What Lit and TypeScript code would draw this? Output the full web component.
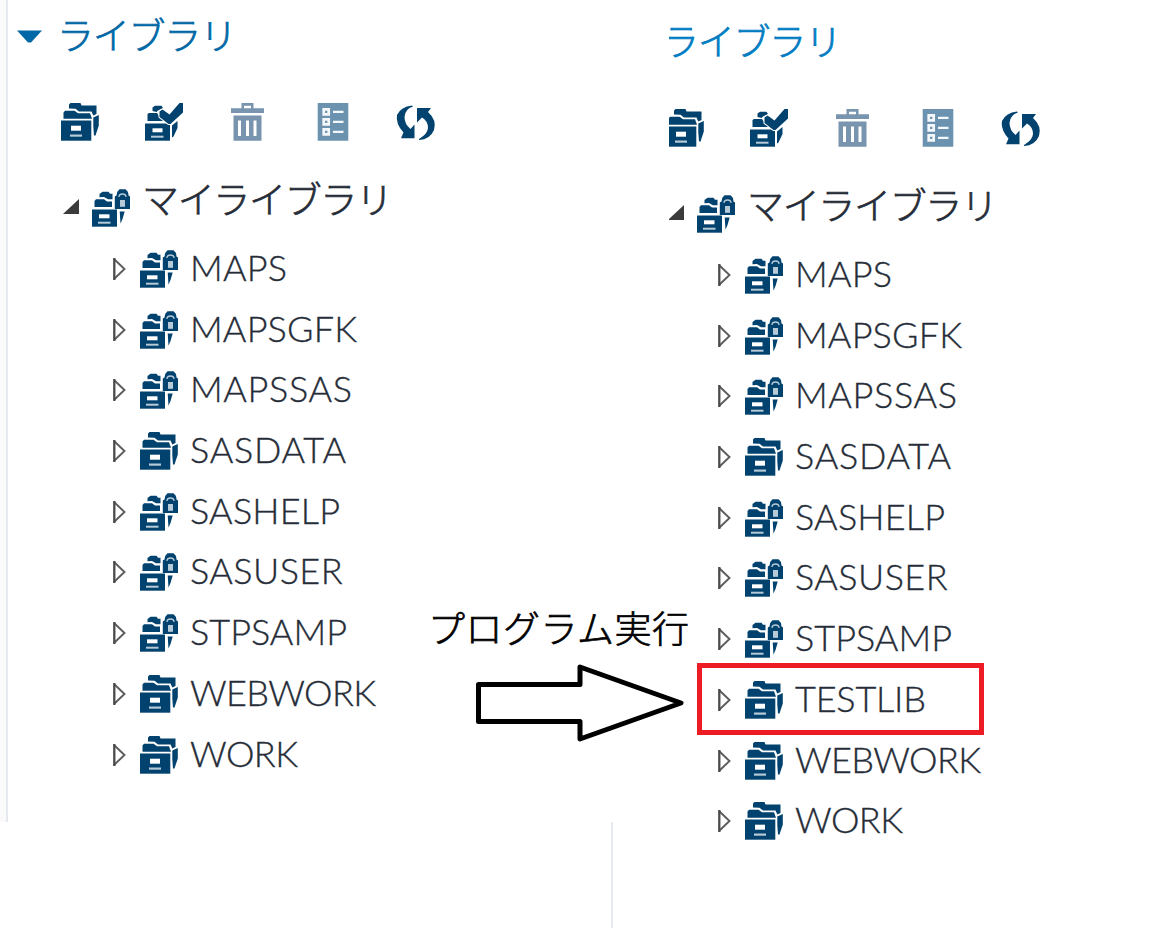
import { LitElement, css, html, svg } from 'lit'
import { customElement, property } from 'lit/decorators.js'

interface Library {
  name: string
  width: number
  locked?: boolean
  marked?: boolean
}

const libraries: Library[] = [
  { name: 'MAPS', width: 97, locked: true },
  { name: 'MAPSGFK', width: 167, locked: true },
  { name: 'MAPSSAS', width: 162, locked: true },
  { name: 'SASDATA', width: 156 },
  { name: 'SASHELP', width: 150, locked: true },
  { name: 'SASUSER', width: 152.5, locked: true },
  { name: 'STPSAMP', width: 157, locked: true },
  { name: 'WEBWORK', width: 186 },
  { name: 'WORK', width: 108 },
]

const withTestlib: Library[] = [
  ...libraries.slice(0, 7),
  { name: 'TESTLIB', width: 131, marked: true },
  ...libraries.slice(7),
]

const icons = {
  library: svg`
    <path d="M0 17.5H30.3V37.7H0Z" />
    <path d="M2.5 15.7V9.5L4 7.7H13.5L17 10.3H29L31 15.7Z" />
    <path d="M8 5.5V1.5L9.5 0H19.5L20.5 2.5H35.5V11L32.3 12.5L30.5 8.5H18L14.5 5.8Z" />
    <path d="M32.3 14.5L37.8 12V22.5L34.5 32.5H33L32.3 23.5Z" />
    <path class="hole" d="M10 22.7H20V27.7H10Z" />
    <path class="pale" d="M9 31.5H21V33.7H9Z" />`,
  locked: svg`
    <path d="M0 20.5H25V37.7H0Z" />
    <path d="M2.5 18V12L4 10.3H12L15 12.5H20V18Z" />
    <path d="M7.5 8.3V5L10.5 2.7H16.5L18 4.8H20.5V10.3H16L12 8Z" />
    <path d="M22.8 20V7.5L24.5 6.5L25.2 3L27.5 .3H33.5L36 3L36.5 6.5L38 7.5V20Z" />
    <path d="M27.7 22.5H32.7L30.5 30L28.5 34.5Z" />
    <path class="hole" d="M7 25.3H17.5V29.3H7Z" />
    <path class="pale" d="M6 32.7H18.5V34.7H6Z" />
    <path class="shackle" d="M26.8 7.8Q27.3 5 30.5 5T34.2 7.8" />
    <path class="pale" d="M28 11H33V17.8H28Z" />`,
  assign: svg`
    <path d="M0 20.5H25V37.7H0Z" />
    <path d="M2.5 18V11L4 10H12L14 13L20 18Z" />
    <path d="M7.5 8V4.5L10 2.7H16.5L18 5L13 7.5L11.5 9Z" />
    <path d="M27 22.5L32.5 18V25L28.5 33.5L27 34.5Z" />
    <path class="tick" d="M14.5 8.5L17.5 6.5L24.5 11.5L34.5 0H38V9.5L25.5 21H23.5L14.5 14Z" />
    <path class="hole" d="M7.5 25.3H17.5V29.3H7.5Z" />
    <path class="pale" d="M6 32.7H18.5V34.7H6Z" />`,
  trash: svg`
    <path class="soft" fill-rule="evenodd" d="M0 5.3H10.5V0H22.5V5.3H33V10H0ZM13 2.7V5.3H20V2.7Z" />
    <path class="soft" fill-rule="evenodd" d="M2.5 12.5H30.5V37.7H2.5ZM7 17.5V33H10V17.5ZM15 17.5V33H18V17.5ZM22.5 17.5V33H25.5V17.5Z" />`,
  properties: svg`
    <path class="steel" d="M.7 0H31.3V37.7H.7Z" />
    <path class="pane" d="M6.7 6.3H11.7V11.3H6.7ZM6.7 16.3H11.7V21.3H6.7ZM6.7 26.3H11.7V31.3H6.7Z" />
    <path class="light" d="M16 7.7H26.5V10H16ZM16 17.7H26.5V20H16ZM16 27.7H26.5V30H16Z" />`,
  refresh: svg`
    <path d="M15 2.5Q4 3.5 0 12Q-1.5 21 6.5 29.5L4 35.3H17.5V21.5L13.5 26Q7.5 21 7.5 14Q8 6 16 3.5Z" />
    <path d="M20 5H34L31 9Q40 17 37 27Q33 36.5 22 37V36Q30.5 31 31 25Q31 18 25 14.5L20 19.5Z" />`,
}

@customElement('lib-icon')
export class LibIcon extends LitElement {
  static styles = css`
    :host {
      display: block;
      flex: none;
      width: 38px;
      height: 38px;
    }

    svg {
      display: block;
      fill: #02426f;
      overflow: visible;
    }

    .hole {
      fill: #fff;
    }
    .pale {
      fill: #b7cad8;
    }
    .shackle {
      fill: none;
      stroke: #b7cad8;
      stroke-width: 1.3;
    }
    .tick {
      stroke: #fff;
      stroke-width: 2;
      paint-order: stroke;
    }
    .soft {
      fill: #7894ae;
    }
    .steel {
      fill: #6b92ae;
    }
    .light {
      fill: #f4f8fa;
    }
    .pane {
      fill: #6b92ae;
      stroke: #f4f8fa;
      stroke-width: 2.7;
    }
  `

  @property({ type: String })
  name: keyof typeof icons = 'library'

  render() {
    return html`<svg width="38" height="38" viewBox="0 0 38 38">${icons[this.name]}</svg>`
  }
}

// Text run fitted to a fixed advance width
@customElement('lib-label')
export class LibLabel extends LitElement {
  static styles = css`
    :host {
      display: block;
      flex: none;
      height: 40px;
    }

    svg {
      display: block;
      overflow: visible;
    }

    text {
      font-family: 'Lato', 'Noto Sans CJK JP', sans-serif;
      font-size: var(--label-size, 37px);
      font-weight: 300;
      fill: currentColor;
      stroke: currentColor;
      stroke-width: var(--label-stroke, 0.7px);
    }
  `

  @property({ type: String })
  text = ''

  @property({ type: Number })
  width = 100

  render() {
    return html`
      <svg width=${this.width} height="40">
        <text x="0" y="34" textLength=${this.width}>${this.text}</text>
      </svg>
    `
  }
}

@customElement('library-panel')
export class LibraryPanel extends LitElement {
  static styles = css`
    :host {
      display: block;
      color: #262d38;
    }

    .heading {
      display: flex;
      align-items: center;
      height: 40px;
      padding-top: 16px;
      color: #0068a6;
    }
    .heading.plain {
      color: #007cc3;
    }
    .caret {
      width: 25px;
      height: 14px;
      margin: 2px 15px 0 17px;
      fill: #0068a6;
    }
    .plain .caret {
      visibility: hidden;
    }

    .toolbar {
      display: grid;
      grid-template-columns: 84px 86px 86px 80px 38px;
      padding: 47px 0 0 61px;
      height: 38px;
    }

    .root {
      display: flex;
      height: 50px;
      padding: 39px 0 0 63px;
    }
    .root .open {
      width: 17px;
      height: 17px;
      margin-top: 18px;
      fill: #3b3b3b;
    }
    .root lib-icon {
      margin: 9px 12px 0 12px;
    }

    .tree {
      padding-top: 9px;
    }
    .row {
      display: flex;
      box-sizing: border-box;
      height: 60.7px;
      padding: 11px 0 0 112px;
      --label-size: 36px;
      --label-stroke: 0.35px;
    }
    .closed {
      width: 15px;
      height: 24px;
      margin: 7px 13px 0 0;
    }
    .closed path {
      fill: none;
      stroke: #4a4a4a;
      stroke-width: 2.3;
    }
    .closed .edge {
      stroke: #5c5c5c;
      stroke-width: 1.9;
    }
    .row lib-icon {
      margin-right: 12px;
    }
    .row lib-label {
      margin-top: -3px;
    }
    .marked {
      position: relative;
    }
    .marked::after {
      content: '';
      position: absolute;
      left: 92px;
      top: -7px;
      box-sizing: border-box;
      width: 287px;
      height: 72px;
      border: 5px solid #ed1c24;
    }
  `

  @property({ attribute: false })
  items: Library[] = []

  @property({ type: Boolean })
  plain = false

  render() {
    return html`
      <div class="heading ${this.plain ? 'plain' : ''}">
        <svg class="caret" viewBox="0 0 25 14"><path d="M0 .5H25L14 12.5H11Z" /></svg>
        <lib-label text="ライブラリ" .width=${180}></lib-label>
      </div>
      <div class="toolbar">
        <lib-icon name="library"></lib-icon>
        <lib-icon name="assign"></lib-icon>
        <lib-icon name="trash"></lib-icon>
        <lib-icon name="properties"></lib-icon>
        <lib-icon name="refresh"></lib-icon>
      </div>
      <div class="root">
        <svg class="open" viewBox="0 0 17 17"><path d="M0 16L16 1V16Z" /></svg>
        <lib-icon name="locked"></lib-icon>
        <lib-label text="マイライブラリ" .width=${251}></lib-label>
      </div>
      <div class="tree">
        ${this.items.map(
          (item) => html`
            <div class="row ${item.marked ? 'marked' : ''}">
              <svg class="closed" viewBox="0 0 15 24">
                <path class="edge" d="M2 2L12.5 12L2 22" />
                <path d="M2.3 1V23" />
              </svg>
              <lib-icon name=${item.locked ? 'locked' : 'library'}></lib-icon>
              <lib-label .text=${item.name} .width=${item.width}></lib-label>
            </div>
          `
        )}
      </div>
    `
  }
}

@customElement('app-root')
export class AppRoot extends LitElement {
  static styles = css`
    :host {
      display: grid;
      grid-template-columns: 611px 1fr;
      position: relative;
      height: 928px;
      overflow: hidden;
      background: #fff;
    }

    .before {
      box-sizing: border-box;
      height: 822px;
      background: linear-gradient(to right, #fafafa 6px, #e6eaef 6px, #e6eaef 8px, #fff 8px);
    }

    .after {
      height: 928px;
      background: linear-gradient(#e6eaef, #e6eaef) 0 822px / 2px 106px no-repeat;
    }
    /* the second panel is cut off on its left edge */
    .after library-panel {
      margin-left: -6px;
      padding-top: 6px;
      clip-path: inset(0 0 0 64px);
    }

    .step {
      position: absolute;
      left: 428px;
      top: 609px;
      color: #000;
    }
    .arrow {
      position: absolute;
      left: 474px;
      top: 662px;
      fill: #fff;
      stroke: #000;
      stroke-width: 5;
      stroke-linejoin: round;
    }
  `

  render() {
    return html`
      <div class="before"><library-panel .items=${libraries}></library-panel></div>
      <div class="after"><library-panel plain .items=${withTestlib}></library-panel></div>
      <lib-label class="step" text="プログラム実行" .width=${261}></lib-label>
      <svg class="arrow" width="214" height="82">
        <path d="M4.5 22.5H106V5L207 41L106 77V59.5H4.5Z" />
      </svg>
    `
  }
}

declare global {
  interface HTMLElementTagNameMap {
    'app-root': AppRoot
    'library-panel': LibraryPanel
    'lib-label': LibLabel
    'lib-icon': LibIcon
  }
}
